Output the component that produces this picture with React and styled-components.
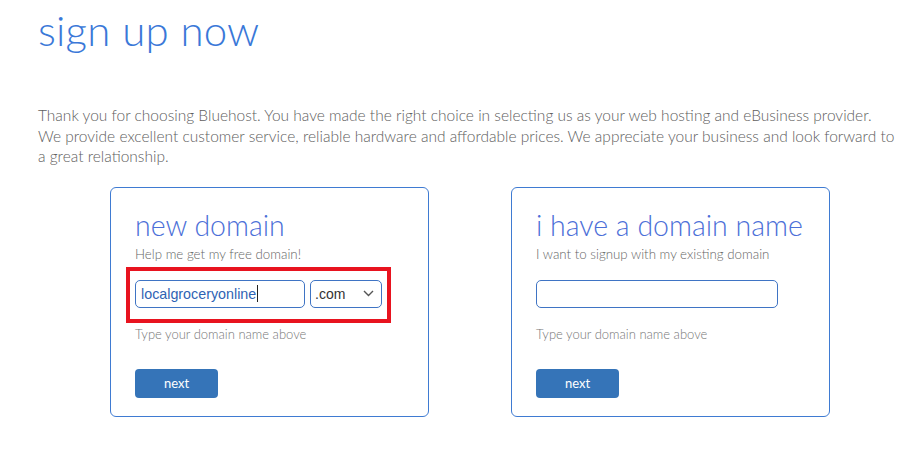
import React from "react";
import styled, { createGlobalStyle } from "styled-components";

const GlobalStyle = createGlobalStyle`
  body {
    margin: 0;
    background: #fff;
    font-family: Lato, "Open Sans", sans-serif;
  }
`;

function Chevron() {
  return (
    <svg width="11" height="7" viewBox="0 0 11 7" fill="none">
      <path d="M1 1l4.5 4.5L10 1" stroke="#555" strokeWidth="1.4" />
    </svg>
  );
}

function DomainCard({ title, subtitle, highlight, children }) {
  return (
    <Card>
      <CardTitle>{title}</CardTitle>
      <CardSub>{subtitle}</CardSub>
      <FieldArea $highlight={highlight}>{children}</FieldArea>
      <Hint>Type your domain name above</Hint>
      <NextButton>next</NextButton>
    </Card>
  );
}

export default function App() {
  return (
    <Page>
      <GlobalStyle />
      <Title>sign up now</Title>
      <Intro>
        Thank you for choosing Bluehost. You have made the right choice in selecting us as your web hosting and eBusiness provider.
        <br />
        We provide excellent customer service, reliable hardware and affordable prices. We appreciate your business and look forward to
        <br />
        a great relationship.
      </Intro>
      <Cards>
        <DomainCard title="new domain" subtitle="Help me get my free domain!" highlight>
          <TextField $width="170px">
            localgroceryonline
            <Caret />
          </TextField>
          <SelectBox>
            <span>.com</span>
            <Chevron />
          </SelectBox>
        </DomainCard>
        <DomainCard title="i have a domain name" subtitle="I want to signup with my existing domain">
          <TextField $width="242px" />
        </DomainCard>
      </Cards>
    </Page>
  );
}

const Page = styled.div`
  padding: 0 10px 0 38px;
  width: 923px;
  box-sizing: border-box;
`;

const Title = styled.h1`
  margin: 0;
  padding-top: 3px;
  font-family: Lato, sans-serif;
  font-weight: 300;
  font-size: 42px;
  line-height: 54px;
  color: #3a78d8;
  letter-spacing: 0.2px;
`;

const Intro = styled.p`
  margin: 48px 0 0;
  font-weight: 300;
  font-size: 15.5px;
  line-height: 20.6px;
  color: #606060;
  white-space: nowrap;
`;

const Cards = styled.div`
  display: flex;
  gap: 82px;
  margin-top: 20px;
  padding-left: 72px;
`;

const Card = styled.div`
  width: 319px;
  height: 230px;
  box-sizing: border-box;
  border: 1px solid #3f7bd2;
  border-radius: 6px;
  padding: 20px 0 0 24px;
  display: flex;
  flex-direction: column;
  align-items: flex-start;
`;

const CardTitle = styled.h2`
  margin: 0;
  font-weight: 300;
  font-size: 28.5px;
  line-height: 34px;
  color: #4c6fd8;
`;

const CardSub = styled.div`
  margin-top: 3px;
  font-weight: 300;
  font-size: 13.3px;
  line-height: 18px;
  color: #666;
`;

const FieldArea = styled.div`
  display: flex;
  gap: 5px;
  margin-top: 4px;
  margin-left: -9px;
  padding: 9px 5px 11px 5px;
  border: 4px solid ${(p) => (p.$highlight ? "#e8131f" : "transparent")};
`;

const TextField = styled.div`
  width: ${(p) => p.$width};
  height: 28px;
  box-sizing: border-box;
  border: 1px solid #3f74c4;
  border-radius: 5px;
  padding: 0 5px;
  display: flex;
  align-items: center;
  font-family: "Liberation Sans", Arial, sans-serif;
  font-size: 14.3px;
  color: #2f63b4;
`;

const Caret = styled.span`
  display: inline-block;
  width: 1px;
  height: 17px;
  background: #222;
  margin-left: 1px;
`;

const SelectBox = styled.div`
  width: 72px;
  height: 28px;
  box-sizing: border-box;
  border: 1px solid #3f74c4;
  border-radius: 5px;
  padding: 0 7px 0 4px;
  display: flex;
  align-items: center;
  justify-content: space-between;
  font-family: "Liberation Sans", Arial, sans-serif;
  font-size: 14px;
  color: #333;
`;

const Hint = styled.div`
  margin-top: 2px;
  font-weight: 300;
  font-size: 13px;
  line-height: 18px;
  color: #777;
`;

const NextButton = styled.button`
  margin-top: 26px;
  width: 83px;
  height: 29px;
  border: none;
  border-radius: 4px;
  background: #3574b8;
  color: #fff;
  font-family: Lato, sans-serif;
  font-size: 13px;
  padding: 0;
  cursor: pointer;
`;
